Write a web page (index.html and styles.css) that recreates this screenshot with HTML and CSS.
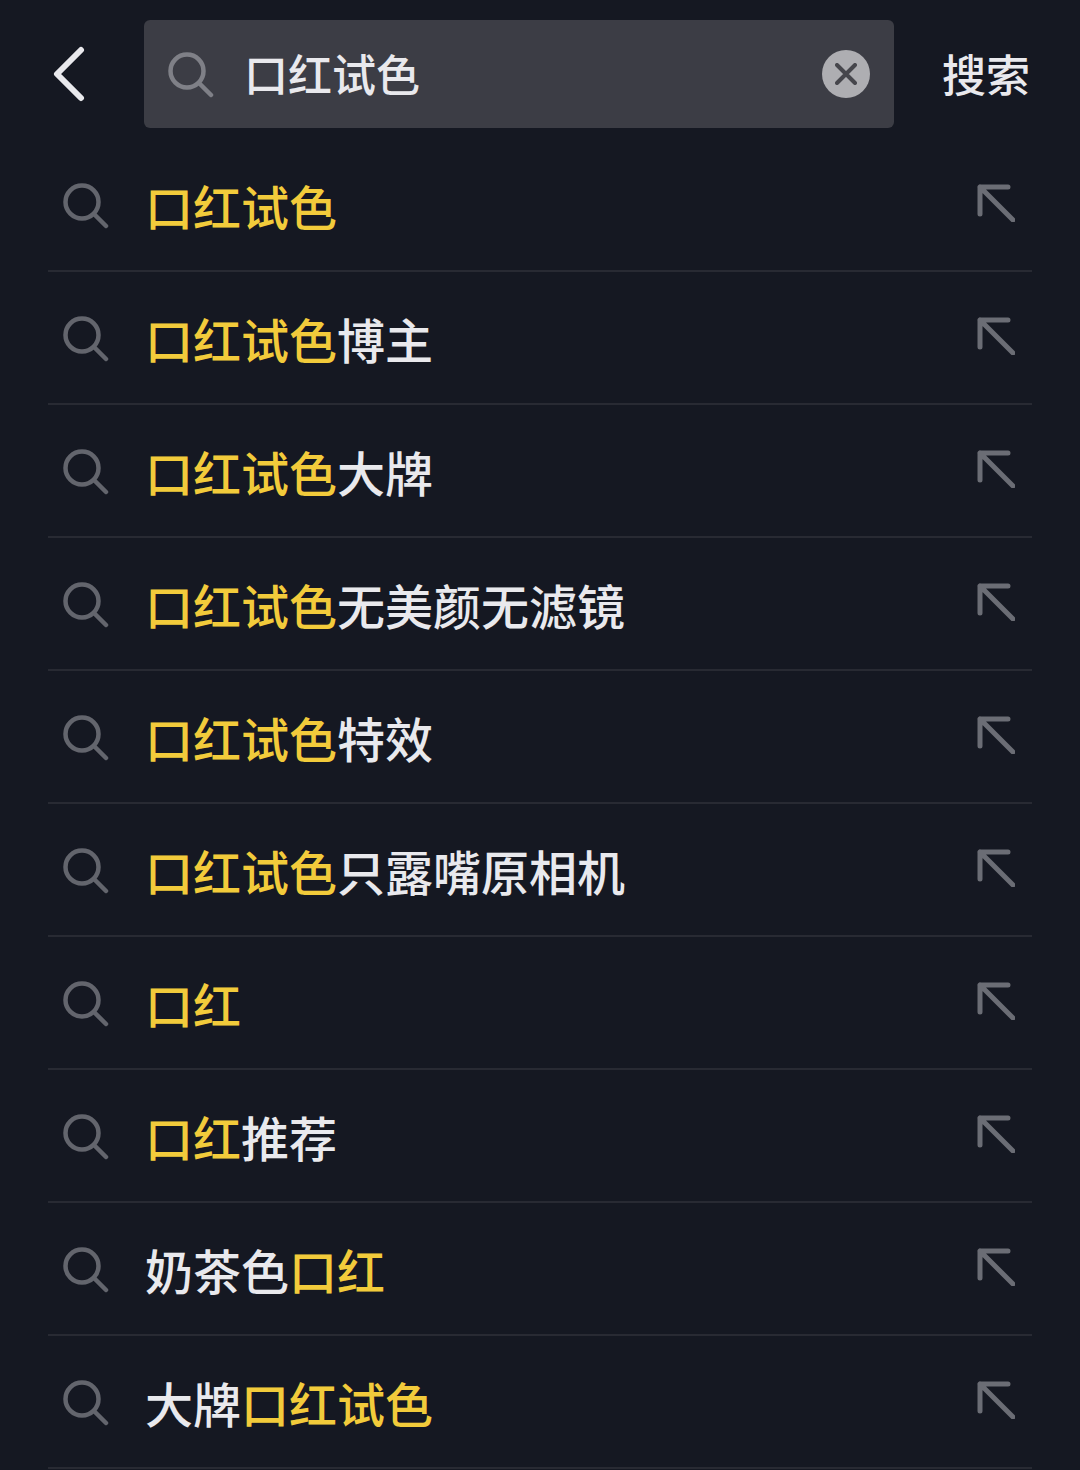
FILE: index.html
```html
<!DOCTYPE html>
<html lang="zh-CN">
<head>
    <meta charset="UTF-8">
    <meta name="viewport" content="width=device-width, initial-scale=1.0">
    <title>搜索</title>
    <link rel="stylesheet" href="styles.css">
</head>
<body>
    <svg class="sprites" width="0" height="0">
        <symbol id="icon-search" viewBox="0 0 46 46">
            <circle cx="19" cy="19" r="16.5" fill="none" stroke="currentColor" stroke-width="4.5"/>
            <line x1="31" y1="31" x2="43" y2="43" stroke="currentColor" stroke-width="4.5" stroke-linecap="round"/>
        </symbol>
        <symbol id="icon-fill" viewBox="0 0 38 38">
            <path d="M31 3H3V30M3 3L36 36" fill="none" stroke="currentColor" stroke-width="5" stroke-linecap="round" stroke-linejoin="round"/>
        </symbol>
    </svg>

    <header class="top-bar">
        <button class="back-btn" aria-label="返回">
            <svg width="32" height="56" viewBox="0 0 32 56">
                <path d="M28 4L4 28L28 52" fill="none" stroke="currentColor" stroke-width="6" stroke-linecap="round" stroke-linejoin="round"/>
            </svg>
        </button>
        <div class="search-box">
            <svg class="search-box-icon"><use href="#icon-search"/></svg>
            <span class="search-text">口红试色</span>
            <span class="clear-btn">
                <svg width="22" height="22" viewBox="0 0 22 22">
                    <path d="M2 2L20 20M20 2L2 20" fill="none" stroke="currentColor" stroke-width="4" stroke-linecap="round"/>
                </svg>
            </span>
        </div>
        <span class="search-action">搜索</span>
    </header>

    <ul class="suggestions">
        <li class="row"><svg class="row-search"><use href="#icon-search"/></svg><span class="row-text"><em>口红试色</em></span><svg class="row-fill"><use href="#icon-fill"/></svg></li>
        <li class="row"><svg class="row-search"><use href="#icon-search"/></svg><span class="row-text"><em>口红试色</em>博主</span><svg class="row-fill"><use href="#icon-fill"/></svg></li>
        <li class="row"><svg class="row-search"><use href="#icon-search"/></svg><span class="row-text"><em>口红试色</em>大牌</span><svg class="row-fill"><use href="#icon-fill"/></svg></li>
        <li class="row"><svg class="row-search"><use href="#icon-search"/></svg><span class="row-text"><em>口红试色</em>无美颜无滤镜</span><svg class="row-fill"><use href="#icon-fill"/></svg></li>
        <li class="row"><svg class="row-search"><use href="#icon-search"/></svg><span class="row-text"><em>口红试色</em>特效</span><svg class="row-fill"><use href="#icon-fill"/></svg></li>
        <li class="row"><svg class="row-search"><use href="#icon-search"/></svg><span class="row-text"><em>口红试色</em>只露嘴原相机</span><svg class="row-fill"><use href="#icon-fill"/></svg></li>
        <li class="row"><svg class="row-search"><use href="#icon-search"/></svg><span class="row-text"><em>口红</em></span><svg class="row-fill"><use href="#icon-fill"/></svg></li>
        <li class="row"><svg class="row-search"><use href="#icon-search"/></svg><span class="row-text"><em>口红</em>推荐</span><svg class="row-fill"><use href="#icon-fill"/></svg></li>
        <li class="row"><svg class="row-search"><use href="#icon-search"/></svg><span class="row-text">奶茶色<em>口红</em></span><svg class="row-fill"><use href="#icon-fill"/></svg></li>
        <li class="row"><svg class="row-search"><use href="#icon-search"/></svg><span class="row-text">大牌<em>口红试色</em></span><svg class="row-fill"><use href="#icon-fill"/></svg></li>
    </ul>
</body>
</html>
```

FILE: styles.css
```css
body {
    margin: 0;
    height: 1470px;
    overflow: hidden;
    background-color: #151822;
    color: #e9e9ed;
    font-family: "Noto Sans CJK SC", "Noto Sans", sans-serif;
}

.sprites {
    display: block;
    height: 0;
}

.top-bar {
    display: flex;
    align-items: center;
    height: 108px;
    padding: 20px 50px 11px 53px;
}

.back-btn {
    display: flex;
    width: 91px;
    padding: 0;
    border: none;
    background: none;
    color: #e9e9ed;
}

.search-box {
    display: flex;
    align-items: center;
    width: 750px;
    height: 108px;
    padding: 0 24px;
    box-sizing: border-box;
    border-radius: 6px;
    background-color: #3c3d45;
}

.search-box-icon {
    width: 46px;
    height: 46px;
    margin-top: 2px;
    color: #7f8087;
}

.search-text {
    flex: 1;
    margin-left: 30px;
    margin-top: -3px;
    font-size: 44px;
    font-weight: 500;
    line-height: 1;
}

.clear-btn {
    display: flex;
    align-items: center;
    justify-content: center;
    width: 48px;
    height: 48px;
    margin-top: -1px;
    border-radius: 50%;
    background-color: #aeaeb2;
    color: #46464c;
}

.search-action {
    margin-left: auto;
    margin-top: -3px;
    font-size: 44px;
    font-weight: 500;
    line-height: 1;
}

.suggestions {
    list-style: none;
    margin: 0 48px;
    padding: 0;
}

.row {
    display: flex;
    align-items: center;
    box-sizing: border-box;
    height: 133px;
    padding: 0 17px 0 15px;
    border-bottom: 2px solid #282a33;
}

.row-search {
    width: 46px;
    height: 46px;
    margin-top: 2px;
    color: #63656d;
}

.row-text {
    flex: 1;
    margin-left: 36px;
    font-size: 48px;
    font-weight: 500;
    line-height: 1;
}

.row-text em {
    font-style: normal;
    color: #f2cb3b;
}

.row-fill {
    width: 38px;
    height: 38px;
    margin-top: -4px;
    color: #6b6d75;
}
```
